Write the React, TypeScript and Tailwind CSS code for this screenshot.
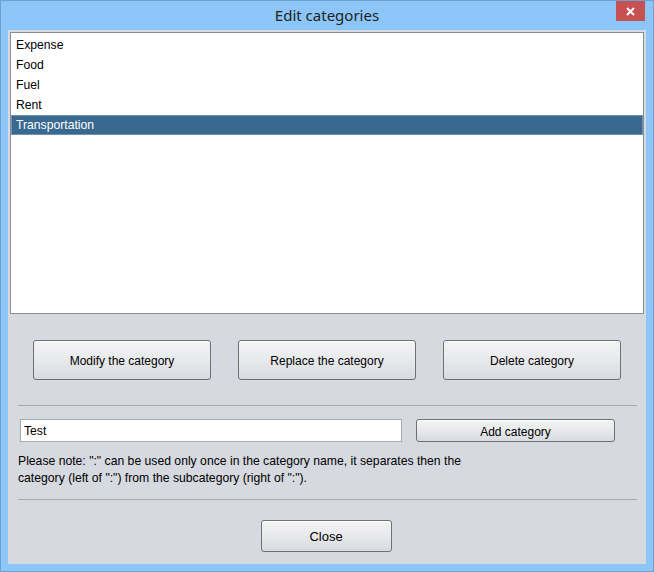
import React from "react";

const btn =
  "flex items-center justify-center pt-[2px] rounded-[3px] border border-[#707070] bg-gradient-to-b from-[#f4f4f5] via-[#e8e9ec] to-[#d8dadf] text-[12px] text-black shadow-[inset_0_1px_0_#ffffff]";

export default function App() {
  const items = ["Expense", "Food", "Fuel", "Rent", "Transportation"];
  return (
    <div
      className="w-[654px] h-[572px] bg-[#8cc6f8] border border-[#6d9fd0] flex flex-col px-[7px] pb-[7px]"
      style={{ fontFamily: '"Liberation Sans", Arial, sans-serif' }}
    >
      <div className="relative h-[29px] flex items-center justify-center">
        <span
          className="text-[15px] text-[#1f1f1f] pb-[1px]"
          style={{ fontFamily: '"Noto Sans", "Open Sans", sans-serif' }}
        >
          Edit categories
        </span>
        <div className="absolute right-[1px] top-0 w-[29px] h-[20px] bg-[#c75050] flex items-center justify-center">
          <svg width="9" height="9" viewBox="0 0 9 9">
            <path d="M1 1 L8 8 M8 1 L1 8" stroke="#ffffff" strokeWidth="2" />
          </svg>
        </div>
      </div>
      <div className="flex-1 bg-[#d6d9df] flex flex-col px-[2px] pt-[2px]">
        <div className="h-[282px] bg-white border border-[#8a8d92] flex flex-col pt-[2px]">
          {items.map((it, i) => (
            <div
              key={it}
              className={
                i === 4
                  ? "h-[20px] flex items-center pl-[4px] text-[12.2px] text-white bg-[#39698f] border border-[#6c93b3]"
                  : "h-[20px] flex items-center pl-[5px] text-[12.2px] text-black"
              }
            >
              {it}
            </div>
          ))}
        </div>
        <div className="flex gap-[27px] pl-[23px] mt-[26px]">
          <div className={btn + " w-[178px] h-[40px]"}>Modify the category</div>
          <div className={btn + " w-[178px] h-[40px]"}>Replace the category</div>
          <div className={btn + " w-[178px] h-[40px]"}>Delete category</div>
        </div>
        <div className="ml-[8px] w-[619px] h-px bg-[#a7a9ae] mt-[25px]" />
        <div className="flex items-center gap-[14px] pl-[10px] mt-[13px]">
          <div className="w-[382px] h-[23px] bg-white border border-[#a9abb0] flex items-center pl-[3px] pt-[1px] text-[12.2px] text-black">
            Test
          </div>
          <div className={btn + " w-[199px] h-[23px]"}>Add category</div>
        </div>
        <div className="pl-[8px] mt-[11px] text-[12.2px] leading-[17px] text-black">
          <div>Please note: ":" can be used only once in the category name, it separates then the</div>
          <div>category (left of ":") from the subcategory (right of ":").</div>
        </div>
        <div className="ml-[8px] w-[619px] h-px bg-[#a7a9ae] mt-[12px]" />
        <div className="flex justify-center pr-[2px] mt-[20px]">
          <div className={btn + " w-[131px] h-[32px] text-[13px]"}>Close</div>
        </div>
      </div>
    </div>
  );
}
